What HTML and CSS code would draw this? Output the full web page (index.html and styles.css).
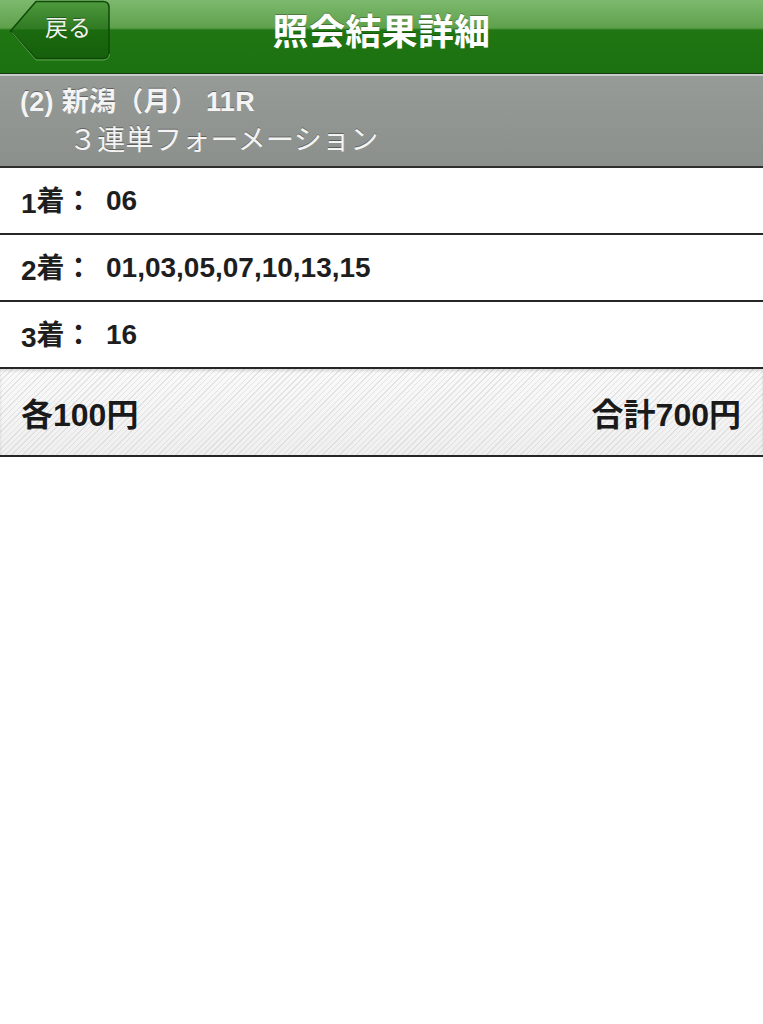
FILE: index.html
```html
<!DOCTYPE html>
<html lang="ja">
<head>
<meta charset="utf-8">
<title>照会結果詳細</title>
<link rel="stylesheet" href="styles.css">
</head>
<body>
<div class="app">
  <header class="navbar">
    <a class="back">
      <svg class="back-shape" width="102" height="62" viewBox="0 0 102 62">
        <defs>
          <linearGradient id="bg" x1="0" y1="0" x2="0" y2="1">
            <stop offset="0" stop-color="#4f9a3e"/>
            <stop offset="0.48" stop-color="#2f7a22"/>
            <stop offset="0.5" stop-color="#1a6a0e"/>
            <stop offset="1" stop-color="#16600c"/>
          </linearGradient>
        </defs>
        <path d="M1.5 31 L27 1.5 H94 Q100 1.5 100 7.5 V52.5 Q100 58.5 94 58.5 H27 Z" fill="url(#bg)" stroke="#0f4a08" stroke-width="1.5"/>
        <path d="M3 32.5 L27 60 H94 Q100 60 100.5 54" fill="none" stroke="#6fb05c" stroke-width="1" opacity="0.8"/>
      </svg>
      <span class="back-label">戻る</span>
    </a>
    <h1 class="title">照会結果詳細</h1>
  </header>
  <section class="race">
    <div class="race-line1">(2) 新潟（月） 11R</div>
    <div class="race-line2">３連単フォーメーション</div>
  </section>
  <div class="row"><span class="lbl">1<span class="jp">着：</span></span><span class="val">06</span></div>
  <div class="row"><span class="lbl">2<span class="jp">着：</span></span><span class="val">01,03,05,07,10,13,15</span></div>
  <div class="row"><span class="lbl">3<span class="jp">着：</span></span><span class="val">16</span></div>
  <div class="total">
    <span>各100円</span>
    <span>合計700円</span>
  </div>
</div>
</body>
</html>
```
FILE: styles.css
```css
html, body {
  margin: 0;
  padding: 0;
  background: #ffffff;
}
body {
  font-family: "Liberation Sans", "Noto Sans CJK JP", sans-serif;
  width: 763px;
}
.navbar {
  position: relative;
  height: 73px;
  border-bottom: 1px solid #1a3a14;
  background: linear-gradient(to bottom, #7db96e 0%, #5ea14c 38%, #3f8a2f 40%, #1f7612 41%, #1c7110 100%);
  display: flex;
  align-items: center;
  justify-content: center;
}
.back {
  position: absolute;
  left: 9px;
  top: 0;
  width: 102px;
  height: 62px;
}
.back-shape {
  position: absolute;
  left: 0;
  top: 0;
}
.back-label {
  position: absolute;
  left: 36px;
  top: 11px;
  font-size: 23px;
  color: #eef4ec;
  font-family: "Noto Sans CJK JP", sans-serif;
  line-height: 30px;
  text-shadow: 0 -1px 0 rgba(0,0,0,0.35);
}
.title {
  margin: 0;
  margin-top: -16px;
  font-family: "Noto Sans CJK JP", sans-serif;
  font-size: 36px;
  font-weight: 700;
  color: #ffffff;
  letter-spacing: 0.3px;
  text-shadow: 0 -1px 0 rgba(0,0,0,0.3);
}
.race {
  height: 94px;
  border-top: 2px solid #c9cdca;
  background: linear-gradient(to bottom, #979b98 0%, #8c908d 100%);
  border-bottom: 2px solid #2e2e2e;
  color: #f4f4f4;
  text-shadow: 0 -1px 0 rgba(0,0,0,0.35);
  box-sizing: border-box;
  padding-top: 10px;
}
.race-line1 {
  padding-left: 20px;
  font-size: 27px;
  font-weight: 700;
  line-height: 32px;
  letter-spacing: 0.3px;
}
.race-line2 {
  padding-left: 69px;
  font-size: 28px;
  line-height: 40px;
  font-family: "Noto Sans CJK JP", sans-serif;
  letter-spacing: 0.3px;
}
.row {
  height: 65px;
  border-bottom: 2px solid #262626;
  display: flex;
  align-items: center;
  padding-left: 21px;
  font-size: 28px;
  font-weight: 700;
  color: #1e1e1e;
}
.lbl {
  width: 85px;
}
.jp {
  position: relative;
  top: -2px;
}
.total {
  border-bottom: 2px solid #262626;
  box-sizing: border-box;
  height: 88px;
  display: flex;
  align-items: center;
  justify-content: space-between;
  padding: 0 22px 0 21px;
  font-size: 32px;
  font-weight: 700;
  color: #1a1a1a;
  background:
    repeating-linear-gradient(-45deg, rgba(255,255,255,0) 0px, rgba(255,255,255,0) 3px, rgba(210,210,210,0.55) 3px, rgba(210,210,210,0.55) 4px),
    linear-gradient(to bottom, #fafafa 0%, #efefef 100%);
  box-shadow: inset 0 2px 3px rgba(0,0,0,0.12);
}
```
